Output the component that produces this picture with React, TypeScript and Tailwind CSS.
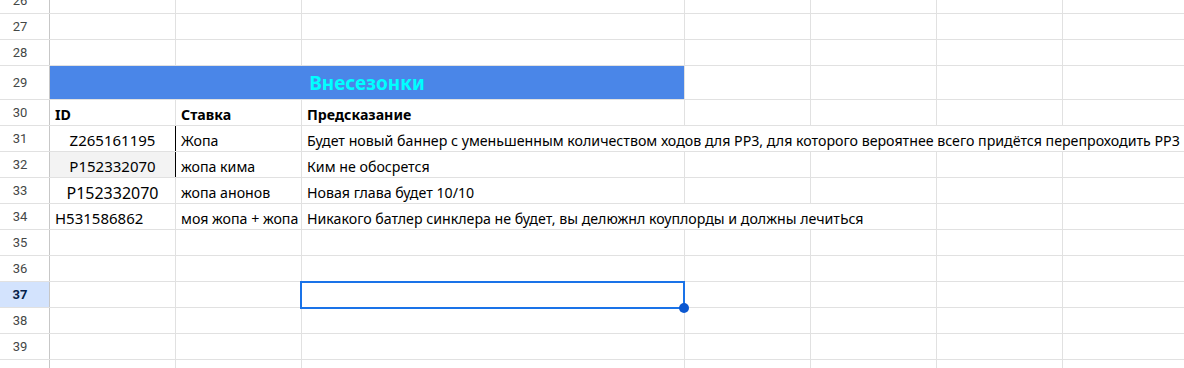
import type { ReactNode } from 'react';

const cellFont = "font-['Noto_Sans',sans-serif]";

// one gridline-bordered cell; width class passed in full
function Cell({
  w,
  className = '',
  children,
}: {
  w: string;
  className?: string;
  children?: ReactNode;
}) {
  return (
    <div
      className={`${w} shrink-0 h-full border-r border-[#e1e1e1] flex items-center px-[5px] pt-[4px] whitespace-nowrap text-[14.2px] text-black ${cellFont} ${className}`}
    >
      {children}
    </div>
  );
}

function RowHeader({ n, active }: { n: number; active?: boolean }) {
  return (
    <div
      className={`w-[50px] shrink-0 h-full border-r border-[#c7c7c7] flex items-center justify-center pr-[9px] text-[13px] font-['Roboto',sans-serif] ${
        active ? 'bg-[#d3e3fd] text-[#041e49] font-bold' : 'text-[#444746]'
      }`}
    >
      {n}
    </div>
  );
}

function Row({ n, tall, active, children }: { n: number; tall?: boolean; active?: boolean; children?: ReactNode }) {
  return (
    <div className={`flex ${tall ? 'h-[34px]' : 'h-[26px]'} border-b border-[#e1e1e1]`}>
      <RowHeader n={n} active={active} />
      {children}
    </div>
  );
}

function EmptyCells() {
  return (
    <>
      <Cell w="w-[126px]" />
      <Cell w="w-[126px]" />
      <Cell w="w-[383px]" />
      <Cell w="w-[126px]" />
      <Cell w="w-[126px]" />
      <Cell w="w-[126px]" />
      <Cell w="w-[126px]" />
    </>
  );
}

function TailCells({ from }: { from: number }) {
  const n = 4 - from;
  return (
    <>
      {Array.from({ length: n }).map((_, i) => (
        <Cell key={i} w="w-[126px]" />
      ))}
    </>
  );
}

export default function App() {
  return (
    <div className="w-[1184px] h-[368px] overflow-hidden bg-white">
      <div className="-mt-[12px]">
        <Row n={26}>
          <EmptyCells />
        </Row>
        <Row n={27}>
          <EmptyCells />
        </Row>
        <Row n={28}>
          <EmptyCells />
        </Row>

        <Row n={29} tall>
          <div className="w-[635px] shrink-0 h-full border-r border-[#e1e1e1] bg-[#4a86e8] flex items-center justify-center pt-[1px]">
            <span className={`text-[19px] font-bold text-[#00ffff] ${cellFont}`}>Внесезонки</span>
          </div>
          <TailCells from={0} />
        </Row>

        <Row n={30}>
          <Cell w="w-[126px]" className="font-bold text-[13.5px]">ID</Cell>
          <Cell w="w-[126px]" className="font-bold text-[13.5px]">Ставка</Cell>
          <Cell w="w-[383px]" className="font-bold text-[13.5px]">Предсказание</Cell>
          <TailCells from={0} />
        </Row>

        <Row n={31}>
          <Cell w="w-[126px]" className="justify-center border-black text-[15px]">Z265161195</Cell>
          <Cell w="w-[126px]">Жопа</Cell>
          <Cell w="w-[887px]" className="overflow-visible">
            Будет новый баннер с уменьшенным количеством ходов для PP3, для которого вероятнее всего придётся перепроходить PP3
          </Cell>
        </Row>

        <Row n={32}>
          <Cell w="w-[126px]" className="justify-center border-black bg-[#f3f3f3] text-[15px]">P152332070</Cell>
          <Cell w="w-[126px]">жопа кима</Cell>
          <Cell w="w-[383px]">Ким не обосрется</Cell>
          <TailCells from={0} />
        </Row>

        <Row n={33}>
          <Cell w="w-[126px]" className="justify-center text-[16px]">P152332070</Cell>
          <Cell w="w-[126px]">жопа анонов</Cell>
          <Cell w="w-[383px]">Новая глава будет 10/10</Cell>
          <TailCells from={0} />
        </Row>

        <Row n={34}>
          <Cell w="w-[126px]" className="text-[15px]">H531586862</Cell>
          <Cell w="w-[126px]" className="overflow-hidden">моя жопа + жопа</Cell>
          <Cell w="w-[635px]">Никакого батлер синклера не будет, вы делюжнл коуплорды и должны лечитЬся</Cell>
          <TailCells from={2} />
        </Row>

        <Row n={35}>
          <EmptyCells />
        </Row>
        <Row n={36}>
          <EmptyCells />
        </Row>

        <Row n={37} active>
          <Cell w="w-[126px]" />
          <Cell w="w-[126px]" />
          <Cell w="w-[383px]" className="relative">
            {/* active cell outline + fill handle */}
            <div className="absolute -left-[2px] -top-px -right-px -bottom-[2px] z-10 border-2 border-[#1a73e8]">
              <div className="absolute -right-[6px] -bottom-[6px] w-[10px] h-[10px] rounded-full bg-[#0b57d0]" />
            </div>
          </Cell>
          <TailCells from={0} />
        </Row>

        <Row n={38}>
          <EmptyCells />
        </Row>
        <Row n={39}>
          <EmptyCells />
        </Row>
        <Row n={40}>
          <EmptyCells />
        </Row>
      </div>
    </div>
  );
}
